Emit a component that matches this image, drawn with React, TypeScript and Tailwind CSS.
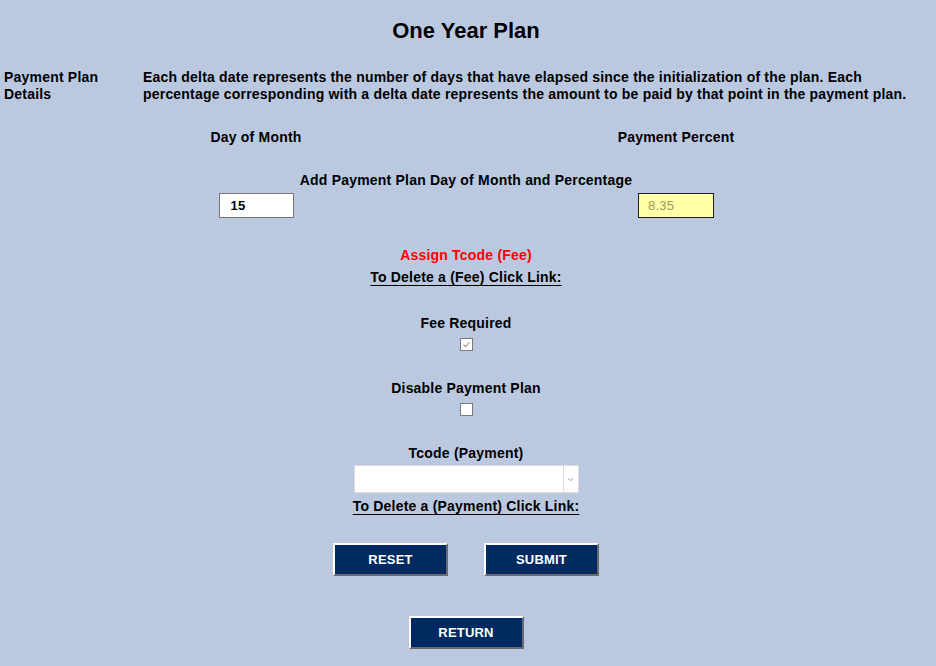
import React from "react";

const font = { fontFamily: '"Liberation Sans", Arial, sans-serif' };

function NavButton({ label }: { label: string }) {
  return (
    <button
      type="button"
      className="w-[115px] h-[33px] bg-[#002a60] text-white text-[13px] font-bold border-2 border-t-white border-l-white border-r-[#6b6b6b] border-b-[#6b6b6b] leading-none"
      style={font}
    >
      {label}
    </button>
  );
}

function Checkbox({ checked }: { checked?: boolean }) {
  return (
    <div className="w-[13px] h-[13px] border border-[#7a7a7a] bg-white flex items-center justify-center">
      {checked && (
        <svg width="9" height="9" viewBox="0 0 9 9">
          <path d="M1.5 4.6 L3.6 6.6 L7.6 2" fill="none" stroke="#9a9a9a" strokeWidth="1.1" />
        </svg>
      )}
    </div>
  );
}

export default function App() {
  return (
    <div
      className="w-[936px] h-[666px] overflow-hidden bg-[#bbc9e0] text-black text-[14px] font-bold tracking-[0.2px]"
      style={font}
    >
      <div className="pl-[4px] pr-[8px]">
        <h1 className="pt-[18px] h-[42px] text-[22px] leading-[26px] text-center font-bold tracking-normal">One Year Plan</h1>

        <div className="mt-[27px] flex leading-[17px]">
          <div className="w-[139px] shrink-0">
            Payment Plan
            <br />
            Details
          </div>
          <div className="flex-1">
            Each delta date represents the number of days that have elapsed since the initialization of the plan. Each
            percentage corresponding with a delta date represents the amount to be paid by that point in the payment plan.
          </div>
        </div>

        <div className="mx-auto w-[840px] grid grid-cols-2 mt-[26px] leading-[17px] text-center">
          <div>Day of Month</div>
          <div>Payment Percent</div>
        </div>

        <div className="mt-[26px] leading-[17px] text-center">Add Payment Plan Day of Month and Percentage</div>

        <div className="mx-auto w-[840px] grid grid-cols-2 mt-[4px]">
          <div className="flex justify-center">
            <div className="w-[75px] h-[25px] bg-white border border-[#767676] flex items-center pl-[11px] text-[13px] font-bold">
              15
            </div>
          </div>
          <div className="flex justify-center">
            <div className="w-[76px] h-[25px] bg-[#ffffa8] border border-[#222] flex items-center pl-[9px] text-[13px] font-normal text-[#9a9a5a]">
              8.35
            </div>
          </div>
        </div>

        <div className="mt-[29px] leading-[17px] text-center text-[#ff0000]">Assign Tcode (Fee)</div>
        <div className="mt-[5px] leading-[17px] text-center">
          <span className="underline underline-offset-[3px]">To Delete a (Fee) Click Link:</span>
        </div>

        <div className="mt-[29px] leading-[17px] text-center">Fee Required</div>
        <div className="mt-[6px] flex justify-center">
          <Checkbox checked />
        </div>

        <div className="mt-[29px] leading-[17px] text-center">Disable Payment Plan</div>
        <div className="mt-[6px] flex justify-center">
          <Checkbox />
        </div>

        <div className="mt-[29px] leading-[17px] text-center">Tcode (Payment)</div>
        <div className="mt-[3px] flex justify-center">
          <div className="w-[225px] h-[28px] bg-white border border-[#dcdcdc] flex">
            <div className="flex-1" />
            <div className="w-[15px] border-l border-[#dcdcdc] flex items-center justify-center">
              <svg width="7" height="5" viewBox="0 0 7 5">
                <path d="M1 1.5 L3.5 3.7 L6 1.5" fill="none" stroke="#a0a0a0" strokeWidth="1" />
              </svg>
            </div>
          </div>
        </div>
        <div className="mt-[5px] leading-[17px] text-center">
          <span className="underline underline-offset-[3px]">To Delete a (Payment) Click Link:</span>
        </div>

        <div className="mt-[28px] flex justify-center gap-[36px]">
          <NavButton label="RESET" />
          <NavButton label="SUBMIT" />
        </div>

        <div className="mt-[40px] flex justify-center">
          <NavButton label="RETURN" />
        </div>
      </div>
    </div>
  );
}
